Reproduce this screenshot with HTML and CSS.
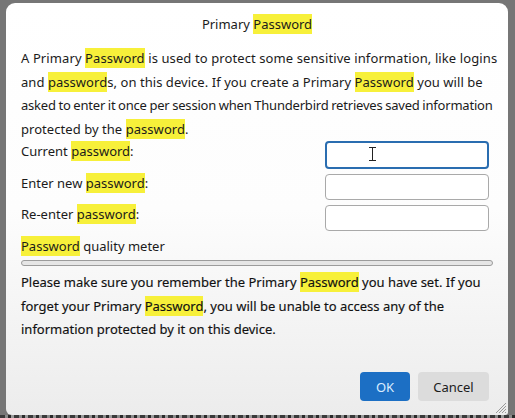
FILE: index.html
```html
<!DOCTYPE html>
<html>
<head>
<meta charset="utf-8">
<link rel="stylesheet" href="styles.css">
</head>
<body>
<div class="dialog">
  <h1 class="title">Primary <mark>Password</mark></h1>
  <p class="intro"><span class="wide">A Primary <mark>Password</mark> is used to protect some sensitive information, like logins</span><br>and <mark>password</mark>s, on this device. If you create a Primary <mark>Password</mark> you will be<br><span class="tight">asked to enter it once per session when Thunderbird retrieves saved information</span><br>protected by the <mark>password</mark>.</p>
  <div class="form">
    <label class="lbl">Current <mark>password</mark>:</label>
    <div class="field focused"><span class="caret"></span></div>
    <label class="lbl">Enter new <mark>password</mark>:</label>
    <div class="field"></div>
    <label class="lbl">Re-enter <mark>password</mark>:</label>
    <div class="field"></div>
  </div>
  <div class="meter-label"><mark>Password</mark> quality meter</div>
  <div class="meter"></div>
  <p class="warn">Please make sure you remember the Primary <mark>Password</mark> you have set. If you<br>forget your Primary <mark>Password</mark>, you will be unable to access any of the<br>information protected by it on this device.</p>
  <div class="buttons">
    <button class="btn btn-ok">OK</button>
    <button class="btn btn-cancel">Cancel</button>
  </div>
  <svg class="grip" width="14" height="14" viewBox="0 0 14 14">
    <path d="M13 3 L3 13 M13 6 L6 13 M13 9 L9 13 M13 12 L12 13" stroke="#9a9a9a" stroke-width="1"/>
  </svg>
</div>
<div class="below"></div>
</body>
</html>
```

FILE: styles.css
```css
html, body {
  margin: 0;
  padding: 0;
}
body {
  width: 515px;
  height: 418px;
  overflow: hidden;
  background: #767676;
  font-family: "Noto Sans", "Open Sans", sans-serif;
  color: #1b1b1b;
}
mark {
  background: #f7f03a;
  color: inherit;
  padding: 1px 0;
}
.dialog {
  position: relative;
  box-sizing: border-box;
  margin: 3px 0 0 6px;
  width: 502px;
  height: 412px;
  border-radius: 9px 9px 3px 6px;
  background: linear-gradient(#ffffff 0%, #fdfdfd 50%, #ececec 100%);
  padding: 0 15px;
  display: flex;
  flex-direction: column;
}
.title {
  margin: 0;
  font-size: 13px;
  font-weight: normal;
  text-align: center;
  line-height: 20px;
  padding-top: 11px;
}
.intro {
  margin: 13px 0 0;
  font-size: 13px;
  line-height: 23.7px;
  white-space: nowrap;
  letter-spacing: 0.05px;
}
.wide {
  letter-spacing: 0.1px;
}
.tight {
  letter-spacing: -0.2px;
  word-spacing: -0.5px;
}
.form {
  display: grid;
  grid-template-columns: 1fr 164px;
  column-gap: 0;
  row-gap: 5px;
  margin-right: 4px;
  margin-top: -1px;
}
.lbl {
  font-size: 13px;
  line-height: 18px;
  align-self: center;
  margin-bottom: 7px;
}
.field {
  box-sizing: border-box;
  height: 26px;
  border: 1px solid #a9a9a9;
  border-radius: 4px;
  background: #fff;
  position: relative;
}
.field.focused {
  height: 28px;
  border: 2px solid #2a6db0;
}
.caret {
  position: absolute;
  left: 45px;
  top: 4px;
  width: 1px;
  height: 14px;
  background: #222;
}
.caret::before, .caret::after {
  content: "";
  position: absolute;
  left: -3px;
  width: 7px;
  height: 1px;
  background: #222;
}
.caret::before { top: 0; }
.caret::after { bottom: 0; }
.meter-label {
  font-size: 13px;
  line-height: 18px;
  margin-top: 6px;
}
.meter {
  margin-top: 5px;
  height: 4px;
  border: 1px solid #9c9c9c;
  border-radius: 4px;
  background: #e6e6e6;
}
.warn {
  margin: 5px 0 0;
  font-size: 13px;
  line-height: 23.7px;
  color: #111;
  white-space: nowrap;
  -webkit-text-stroke: 0.15px #111;
}
.buttons {
  display: flex;
  justify-content: flex-end;
  gap: 8px;
  margin-top: auto;
  margin-bottom: 14px;
  margin-right: 4px;
}
.btn {
  font-family: inherit;
  font-size: 13px;
  height: 29px;
  border: none;
  border-radius: 4px;
  padding: 0;
}
.btn-ok {
  width: 50px;
  background: #1c6fc4;
  color: #d9ecff;
}
.btn-cancel {
  width: 71px;
  background: #dcdcdc;
  color: #1b1b1b;
}
.grip {
  position: absolute;
  right: 1px;
  bottom: 1px;
}
.below {
  height: 3px;
  background: repeating-linear-gradient(90deg, #3a3a3a 0 5px, #8a8a8a 5px 8px, #2a2a2a 8px 11px, #9a9a9a 11px 14px);
}
```
